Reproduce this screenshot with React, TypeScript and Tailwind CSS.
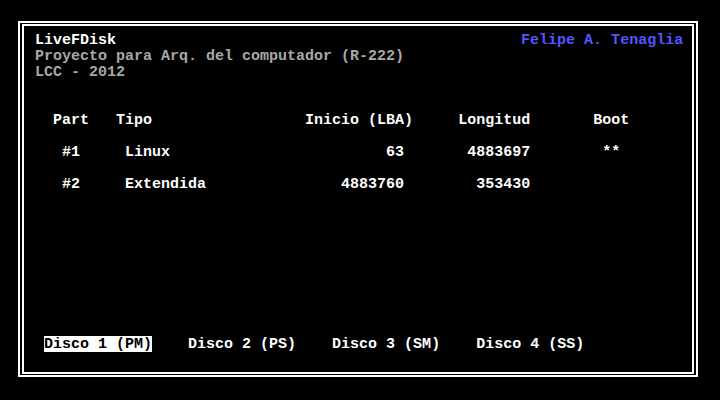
import React from "react";

type Seg = { col: number; text: string; cls?: string };

// text-mode screen: 80x25, cells of 9x16, first column drawn here is col 3
const START = 3;

const rows: Record<number, Seg[]> = {
  2: [
    { col: 4, text: "LiveFDisk", cls: "text-white" },
    { col: 58, text: "Felipe A. Tenaglia", cls: "text-[#5555ff]" },
  ],
  3: [{ col: 4, text: "Proyecto para Arq. del computador (R-222)", cls: "text-[#a8a8a8]" }],
  4: [{ col: 4, text: "LCC - 2012", cls: "text-[#a8a8a8]" }],
  7: [
    { col: 6, text: "Part" },
    { col: 13, text: "Tipo" },
    { col: 34, text: "Inicio (LBA)" },
    { col: 51, text: "Longitud" },
    { col: 66, text: "Boot" },
  ],
  9: [
    { col: 7, text: "#1" },
    { col: 14, text: "Linux" },
    { col: 43, text: "63" },
    { col: 52, text: "4883697" },
    { col: 67, text: "**" },
  ],
  11: [
    { col: 7, text: "#2" },
    { col: 14, text: "Extendida" },
    { col: 38, text: "4883760" },
    { col: 53, text: "353430" },
  ],
  21: [
    { col: 5, text: "Disco 1 (PM)", cls: "bg-white text-black" },
    { col: 21, text: "Disco 2 (PS)" },
    { col: 37, text: "Disco 3 (SM)" },
    { col: 53, text: "Disco 4 (SS)" },
  ],
};

function Line({ segs }: { segs?: Seg[] }) {
  let cur = START;
  return (
    <div className="h-4 leading-4 whitespace-pre">
      {(segs ?? []).map((s, i) => {
        const pad = " ".repeat(Math.max(0, s.col - cur));
        cur = s.col + s.text.length;
        return (
          <React.Fragment key={i}>
            {pad}
            <span className={`inline-block h-4 pt-px align-top ${s.cls ?? "text-white"}`}>{s.text}</span>
          </React.Fragment>
        );
      })}
    </div>
  );
}

export default function App() {
  const lines = Array.from({ length: 20 }, (_, i) => i + 2);
  return (
    <div className="w-[720px] h-[400px] bg-black pt-[21px] pl-[18px] overflow-hidden">
      <div className="w-[680px] h-[356px] border-2 border-white px-[2px] py-[1px]">
        <div className="h-full border-2 border-white pl-[2px] pt-[6px] font-['Liberation_Mono',monospace] text-[15px] font-bold">
          {lines.map((r) => (
            <Line key={r} segs={rows[r]} />
          ))}
        </div>
      </div>
    </div>
  );
}
